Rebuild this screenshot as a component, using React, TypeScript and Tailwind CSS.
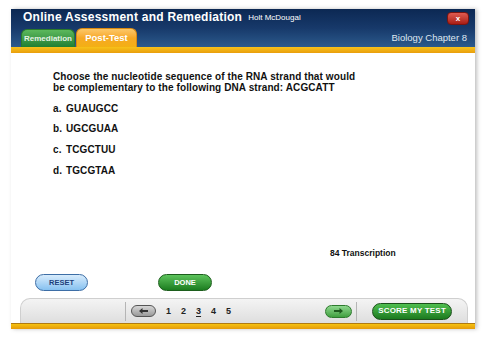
import React from "react";

const font = { fontFamily: '"Liberation Sans", Arial, sans-serif' };

function Arrow({ dir, color }: { dir: "left" | "right"; color: string }) {
  return (
    <svg width="9" height="6" viewBox="0 0 9 6">
      {dir === "left" ? (
        <path d="M0 3 L3.5 0 V2 H9 V4 H3.5 V6 Z" fill={color} />
      ) : (
        <path d="M9 3 L5.5 0 V2 H0 V4 H5.5 V6 Z" fill={color} />
      )}
    </svg>
  );
}

export default function App() {
  const options = [
    ["a.", "GUAUGCC"],
    ["b.", "UGCGUAA"],
    ["c.", "TCGCTUU"],
    ["d.", "TGCGTAA"],
  ];
  return (
    <div className="w-[487px] h-[340px] bg-white overflow-hidden" style={font}>
      <div className="ml-[11px] mt-[9px] w-[464px] shadow-[2px_0_4px_rgba(0,0,0,0.25)] bg-white flex flex-col">
        {/* header */}
        <div className="h-[38px] bg-gradient-to-b from-[#0c2853] via-[#17396a] to-[#2c5a8c] flex flex-col">
          <div className="h-[19px] flex items-start pt-[1px] pl-[12px] pr-[6px]">
            <span className="text-white font-bold text-[12px] leading-none tracking-[0.25px] mt-[1px]">
              Online Assessment and Remediation
            </span>
            <span className="text-white text-[8px] leading-none ml-[6px] mt-[4px]">Holt McDougal</span>
            <div className="ml-auto mt-[2px] w-[22px] h-[13px] rounded-[4px] bg-gradient-to-b from-[#e05a50] to-[#a81c14] border border-[#7a1410] flex items-center justify-center">
              <span className="text-white text-[8px] font-bold leading-none">x</span>
            </div>
          </div>
          <div className="flex-1 flex items-end pl-[10px] pr-[8px]">
            <div className="w-[54px] h-[18px] rounded-t-[6px] bg-gradient-to-b from-[#5cb85c] to-[#1f7f34] border border-[#2a7a2a] border-b-0 flex items-center justify-center">
              <span className="text-[#e6f3e6] font-bold text-[8px] leading-none">Remediation</span>
            </div>
            <div className="ml-[1px] w-[61px] h-[19px] rounded-t-[6px] bg-gradient-to-b from-[#fcc866] via-[#f7a823] to-[#f3b013] border border-[#d98a12] border-b-0 flex items-center justify-center">
              <span className="text-white font-bold text-[9.5px] leading-none">Post-Test</span>
            </div>
            <span className="ml-auto mb-[5px] text-[#dfe7f1] text-[9.5px] leading-none">Biology Chapter 8</span>
          </div>
        </div>
        <div className="h-[6px] bg-gradient-to-b from-[#f7c21a] to-[#e99e0c]" />
        {/* body */}
        <div className="h-[270px] flex flex-col">
          <div className="pl-[42px] pt-[18px] text-[#111] font-bold text-[10px] leading-[11px] tracking-[0.1px]">
            <p>Choose the nucleotide sequence of the RNA strand that would</p>
            <p>be complementary to the following DNA strand: ACGCATT</p>
            <div className="mt-[9.5px] flex flex-col gap-[9.7px]">
              {options.map(([l, t]) => (
                <div key={l} className="flex">
                  <span className="w-[13px]">{l}</span>
                  <span>{t}</span>
                </div>
              ))}
            </div>
          </div>
          <div className="mt-[73px] pl-[319px] text-[#111] font-bold text-[8.5px] leading-none">84 Transcription</div>
          <div className="mt-[17px] flex pl-[24px]">
            <div className="w-[53px] h-[17px] rounded-full bg-gradient-to-b from-[#d8ecfc] to-[#86c1f0] border border-[#3d6ea6] flex items-center justify-center">
              <span className="text-[#1d3f7a] font-bold text-[7.5px] leading-none">RESET</span>
            </div>
            <div className="ml-[70px] w-[54px] h-[17px] rounded-full bg-gradient-to-b from-[#5cc45c] to-[#1b7d1f] border border-[#1c5e1c] flex items-center justify-center">
              <span className="text-white font-bold text-[7.5px] leading-none">DONE</span>
            </div>
          </div>
          <div className="mt-auto ml-[9px] mr-[7px] h-[25px] rounded-t-[10px] bg-gradient-to-b from-[#f4f4f4] to-[#dedede] border border-[#cfcfcf] border-b-0 flex items-center">
            <div className="ml-[104px] w-px h-[19px] bg-[#b5b5b5]" />
            <div className="ml-[5px] w-[25px] h-[12px] rounded-full bg-gradient-to-b from-[#d6d6d6] to-[#9a9a9a] border border-[#555] flex items-center justify-center">
              <Arrow dir="left" color="#333" />
            </div>
            <div className="ml-[10px] flex gap-[10px] text-[#222] font-bold text-[9px] leading-none">
              <span>1</span>
              <span>2</span>
              <span className="underline underline-offset-2">3</span>
              <span>4</span>
              <span>5</span>
            </div>
            <div className="ml-[94px] w-[27px] h-[13px] rounded-full bg-gradient-to-b from-[#8ed88e] to-[#3f9f3f] border border-[#2d7a2d] flex items-center justify-center">
              <Arrow dir="right" color="#1e5a1e" />
            </div>
            <div className="ml-[4px] w-px h-[19px] bg-[#b5b5b5]" />
            <div className="ml-[15px] w-[80px] h-[17px] rounded-full bg-gradient-to-b from-[#4fbf4f] to-[#1b7a1f] border-[1.5px] border-[#1b4f1b] flex items-center justify-center">
              <span className="text-white font-bold text-[8px] leading-none tracking-[0.2px]">SCORE MY TEST</span>
            </div>
          </div>
        </div>
        <div className="h-[6px] bg-gradient-to-b from-[#f5c20f] to-[#e59a0a] border-t border-[#b07a10]" />
      </div>
    </div>
  );
}
